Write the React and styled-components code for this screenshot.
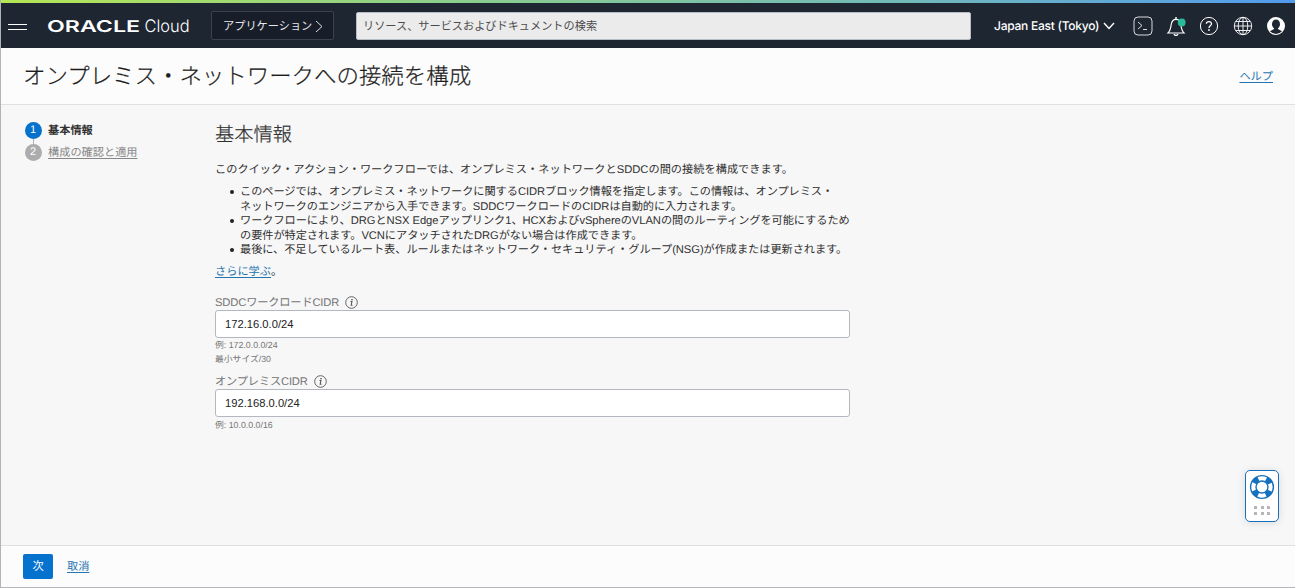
import styled, { createGlobalStyle } from 'styled-components'

const colors = {
  header: '#1e2632',
  primary: '#0572ce',
  link: '#2474b0',
  text: '#303030',
  muted: '#757575',
  page: '#f7f7f7',
  surface: '#fcfcfc',
}

const GlobalStyle = createGlobalStyle`
  * {
    box-sizing: border-box;
  }
  body {
    margin: 0;
    font-family: 'Liberation Sans', 'Noto Sans CJK JP', sans-serif;
    font-size: 11.2px;
    text-rendering: geometricPrecision;
    color: ${colors.text};
  }
`

const Page = styled.div`
  display: flex;
  flex-direction: column;
  height: 588px;
  overflow: hidden;
  background: ${colors.page};
  border-left: 1px solid #b2b3b5;
  border-bottom: 1px solid #b5b5b8;
`

const Rainbow = styled.div`
  flex: none;
  height: 3px;
  margin-left: -1px;
  background: linear-gradient(90deg, #b5e655 0%, #8ecf8a 33%, #71b9b9 70%, #529bee 100%);
`

const Header = styled.header`
  flex: none;
  display: flex;
  align-items: center;
  height: 45px;
  padding-left: 7px;
  background: ${colors.header};
  color: #fff;
`

const MenuIcon = styled.svg`
  flex: none;
  width: 19px;
  height: 8px;
  margin: 3px 20px 0 0;
`

const Logo = styled.svg`
  flex: none;
  width: 145px;
  height: 24px;
`

const AppButton = styled.button`
  flex: none;
  display: flex;
  align-items: center;
  width: 123px;
  height: 29px;
  margin: 0 22px 0 19px;
  padding: 0 10px 0 11px;
  border: 1px solid #3b424e;
  border-radius: 2px;
  background: #181e29;
  color: #e8e8ea;
  font: inherit;
  line-height: 16px;
  white-space: nowrap;

  svg {
    flex: none;
    margin: 1px 0 0 3px;
  }
`

const SearchBox = styled.input`
  flex: none;
  width: 615px;
  height: 28px;
  margin-top: 1px;
  padding: 0 6px;
  border: 1px solid #b7bdc5;
  border-radius: 2px;
  background: #ebebeb;
  font-family: inherit;
  font-size: 11.18px;
  &::placeholder {
    color: #4c4c4c;
    opacity: 1;
  }
`

const Region = styled.div`
  flex: none;
  display: flex;
  align-items: center;
  justify-content: space-between;
  width: 121px;
  margin: 0 17.5px 0 23px;
  font-family: Inter, sans-serif;
  font-size: 12px;
  font-weight: 500;
  letter-spacing: -0.25px;
  white-space: nowrap;
`

const HeaderIcons = styled.div`
  display: flex;
  align-items: center;
  gap: 13.4px;

  svg {
    flex: none;
  }
`

const TitleBar = styled.div`
  flex: none;
  display: flex;
  align-items: center;
  justify-content: space-between;
  height: 57px;
  padding: 0 22px;
  background: ${colors.surface};
  border-bottom: 1px solid #e0e0e0;
`

const PageTitle = styled.h1`
  margin: 2px 0 0;
  font-size: 22.45px;
  font-weight: 300;
  line-height: 32px;
  color: #1c1c1c;
  -webkit-text-stroke: 0.2px #1c1c1c;
`

const TextLink = styled.a`
  color: ${({ $muted }) => ($muted ? '#868686' : colors.link)};
  text-decoration: underline;
  text-underline-offset: 2px;
  cursor: pointer;
`

const Main = styled.main`
  flex: 1;
  display: flex;
  min-height: 0;
  padding-top: 14px;
`

const Steps = styled.ol`
  flex: none;
  width: 214px;
  margin: 0;
  padding: 0 0 0 23.5px;
  list-style: none;
`

const Step = styled.li`
  display: flex;
  align-items: center;
  height: 22px;
  line-height: 22px;
  white-space: nowrap;
`

const StepText = styled.span`
  padding-top: 2px;
  font-weight: ${({ $active }) => ($active ? 700 : 400)};
`

const StepNumber = styled.span`
  position: relative;
  display: flex;
  align-items: center;
  justify-content: center;
  width: 17px;
  height: 17px;
  margin-right: 6.5px;
  border-radius: 50%;
  background: ${({ $active }) => ($active ? colors.primary : '#acacac')};
  color: #fff;
  font-size: 11px;

  /* trait reliant les deux étapes */
  &::after {
    content: '';
    display: ${({ $active }) => ($active ? 'block' : 'none')};
    position: absolute;
    left: 8px;
    top: 17px;
    width: 1px;
    height: 5px;
    background: #b5b5b5;
  }
`

const Content = styled.section`
  width: 640px;
`

const SectionTitle = styled.h2`
  margin: 0 0 12px;
  padding-top: 3px;
  font-size: 19.3px;
  font-weight: 300;
  line-height: 28px;
  -webkit-text-stroke: 0.2px ${colors.text};
`

const Paragraph = styled.p`
  margin: 0;
  line-height: 16px;
  letter-spacing: 0.02px;
  white-space: nowrap;
`

const BulletList = styled.ul`
  margin: 7px 0 6px;
  padding-left: 25px;
  line-height: 14.5px;
  letter-spacing: -0.05px;
  list-style: none;
`

const Bullet = styled.li`
  position: relative;
  white-space: nowrap;

  &::before {
    content: '';
    position: absolute;
    left: -10px;
    top: 5px;
    width: 4px;
    height: 4px;
    border-radius: 50%;
    background: #222;
  }
`

const Line = styled.span`
  display: block;
  height: 14.5px;
`

const Field = styled.div`
  margin-top: ${({ $gap }) => $gap}px;
`

const Label = styled.label`
  display: flex;
  align-items: center;
  height: 16px;
  padding-top: 1px;
  color: ${colors.muted};
  letter-spacing: -0.14px;

  svg {
    margin-left: 6px;
  }
`

const Input = styled.input`
  display: block;
  width: 635px;
  height: 28px;
  padding: 0 9px;
  border: 1px solid #b3b8c0;
  border-radius: 3px;
  background: #fff;
  color: #222;
  font-family: inherit;
  font-size: 11.2px;
`

const Hint = styled.div`
  height: 14px;
  margin-top: ${({ $gap = 0 }) => $gap}px;
  line-height: 14px;
  font-size: 8.8px;
  color: ${colors.muted};
`

const Footer = styled.footer`
  flex: none;
  display: flex;
  align-items: center;
  gap: 14px;
  height: 42px;
  padding-left: 22px;
  background: ${colors.surface};
  border-top: 1px solid #dedede;

  a {
    margin-bottom: 2px;
  }
`

const NextButton = styled.button`
  width: 30px;
  height: 25px;
  padding: 0;
  border: none;
  border-radius: 2px;
  background: ${colors.primary};
  color: #fff;
  font: inherit;
  line-height: 25px;
`

const HelpWidget = styled.div`
  position: absolute;
  left: 1245px;
  top: 470px;
  display: flex;
  flex-direction: column;
  align-items: center;
  width: 34px;
  height: 52px;
  padding-top: 3px;
  border: 1px solid #1a70b8;
  border-radius: 5px;
  background: #fff;
  box-shadow: 0 1px 9px rgba(0, 0, 0, 0.12);
`

const DragDots = styled.div`
  display: grid;
  grid-template-columns: repeat(3, 3px);
  gap: 3px 3.5px;
  margin-top: 6px;

  i {
    height: 3px;
    background: #b5b5ba;
  }
`

const InfoIcon = () => (
  <svg width="13" height="13" viewBox="0 0 13 13" fill="none" stroke="#555">
    <circle cx="6.5" cy="6.5" r="5.8" strokeWidth="0.9" />
    <circle cx="7" cy="3.7" r="0.8" fill="#444" stroke="none" />
    <path d="M5.5 5.5H6.9L6.2 9.2H7.5" strokeWidth="1.1" />
  </svg>
)

const Lifebuoy = () => (
  <svg width="26" height="26" viewBox="0 0 26 26" fill="none">
    <circle
      cx="13"
      cy="13"
      r="8.9"
      stroke="#1570bd"
      strokeWidth="5.4"
      strokeDasharray="6 7.98"
      strokeDashoffset="-3.99"
    />
    <circle cx="13" cy="13" r="11.4" stroke="#1570bd" strokeWidth="1.4" />
    <circle cx="13" cy="13" r="6" stroke="#1570bd" strokeWidth="1.4" />
  </svg>
)

const OracleLogo = () => (
  <Logo viewBox="0 0 145 24" fill="#fff">
    <text x="0" y="18" fontFamily="Inter, sans-serif" fontWeight="600" fontSize="16.3" textLength="93" lengthAdjust="spacingAndGlyphs">
      ORACLE
    </text>
    <text x="97.5" y="18" fontFamily="Inter, sans-serif" fontWeight="300" fontSize="17.2" textLength="45" lengthAdjust="spacingAndGlyphs">
      Cloud
    </text>
  </Logo>
)

function TopBar() {
  return (
    <Header>
      <MenuIcon viewBox="0 0 19 8" stroke="#fff">
        <path d="M0 1.5H19M0 6.5H19" />
      </MenuIcon>
      <OracleLogo />
      <AppButton>
        アプリケーション
        <svg width="8" height="13" viewBox="0 0 8 13" fill="none" stroke="#ddd">
          <path d="M1 1L7 6.5L1 12" />
        </svg>
      </AppButton>
      <SearchBox placeholder="リソース、サービスおよびドキュメントの検索" />
      <Region>
        Japan East (Tokyo)
        <svg width="12" height="8" viewBox="0 0 12 8" fill="none" stroke="#fff" strokeWidth="1.4">
          <path d="M1 1L6 6.5L11 1" />
        </svg>
      </Region>
      <HeaderIcons>
        <svg width="20" height="20" viewBox="0 0 20 20" fill="none" stroke="#d8dade">
          <rect x="1" y="1" width="18" height="18" rx="4" />
          <path d="M5 6L9 9.5L5 13M10 13.5H14" />
        </svg>
        <svg width="20" height="20" viewBox="0 0 20 20" fill="none" stroke="#fff">
          <path d="M2 17C4.5 14.5 4.8 12 5.2 8.5C5.7 5 7.5 3.3 10 3.3C12.5 3.3 14.3 5 14.8 8.5C15.2 12 15.5 14.5 18 17Z" strokeWidth="1.2" />
          <path d="M10 1V3.3M8.2 18A1.8 1.4 0 0 0 11.8 18" strokeWidth="1.4" />
          <circle cx="15.7" cy="6.5" r="3.9" fill="#2bbb9b" stroke="none" />
        </svg>
        <svg width="20" height="20" viewBox="0 0 20 20" fill="none" stroke="#fff">
          <circle cx="10" cy="10" r="8.6" />
          <path d="M7.4 7.8C7.5 4.9 12.6 5 12.5 8C12.4 9.8 10 9.8 10 12" strokeWidth="1.3" />
          <circle cx="10" cy="14" r="0.9" fill="#fff" stroke="none" />
        </svg>
        <svg width="20" height="20" viewBox="0 0 20 20" fill="none" stroke="#fff" strokeWidth="0.9">
          <circle cx="10" cy="10" r="8.7" />
          <ellipse cx="10" cy="10" rx="4.8" ry="8.7" />
          <path d="M10 1.3V18.7M1.3 10H18.7M2.8 5.5H17.2M2.8 14.5H17.2" />
        </svg>
        <svg width="20" height="20" viewBox="0 0 20 20">
          <circle cx="10" cy="10" r="9" fill="#fff" />
          <ellipse cx="10" cy="8.2" rx="4" ry="4.8" fill={colors.header} />
          <path d="M8 11H12V13L16 15.3Q13.5 18 10 18Q6.5 18 4 15.3L8 13Z" fill={colors.header} />
        </svg>
      </HeaderIcons>
    </Header>
  )
}

function App() {
  return (
    <Page>
      <GlobalStyle />
      <Rainbow />
      <TopBar />
      <TitleBar>
        <PageTitle>オンプレミス・ネットワークへの接続を構成</PageTitle>
        <TextLink>ヘルプ</TextLink>
      </TitleBar>
      <Main>
        <Steps>
          <Step>
            <StepNumber $active>1</StepNumber>
            <StepText $active>基本情報</StepText>
          </Step>
          <Step>
            <StepNumber>2</StepNumber>
            <StepText>
              <TextLink $muted>構成の確認と適用</TextLink>
            </StepText>
          </Step>
        </Steps>
        <Content>
          <SectionTitle>基本情報</SectionTitle>
          <Paragraph>
            このクイック・アクション・ワークフローでは、オンプレミス・ネットワークとSDDCの間の接続を構成できます。
          </Paragraph>
          <BulletList>
            <Bullet>
              <Line>このページでは、オンプレミス・ネットワークに関するCIDRブロック情報を指定します。この情報は、オンプレミス・</Line>
              <Line>ネットワークのエンジニアから入手できます。SDDCワークロードのCIDRは自動的に入力されます。</Line>
            </Bullet>
            <Bullet>
              <Line>ワークフローにより、DRGとNSX Edgeアップリンク1、HCXおよびvSphereのVLANの間のルーティングを可能にするため</Line>
              <Line>の要件が特定されます。VCNにアタッチされたDRGがない場合は作成できます。</Line>
            </Bullet>
            <Bullet>
              <Line>最後に、不足しているルート表、ルールまたはネットワーク・セキュリティ・グループ(NSG)が作成または更新されます。</Line>
            </Bullet>
          </BulletList>
          <Paragraph>
            <TextLink>さらに学ぶ</TextLink>。
          </Paragraph>
          <Field $gap={14}>
            <Label>
              SDDCワークロードCIDR
              <InfoIcon />
            </Label>
            <Input defaultValue="172.16.0.0/24" />
            <Hint>例: 172.0.0.0/24</Hint>
            <Hint>最小サイズ/30</Hint>
          </Field>
          <Field $gap={7}>
            <Label>
              オンプレミスCIDR
              <InfoIcon />
            </Label>
            <Input defaultValue="192.168.0.0/24" />
            <Hint $gap={1}>例: 10.0.0.0/16</Hint>
          </Field>
        </Content>
      </Main>
      <Footer>
        <NextButton>次</NextButton>
        <TextLink>取消</TextLink>
      </Footer>
      <HelpWidget>
        <Lifebuoy />
        <DragDots>
          <i /><i /><i />
          <i /><i /><i />
        </DragDots>
      </HelpWidget>
    </Page>
  )
}

export default App
